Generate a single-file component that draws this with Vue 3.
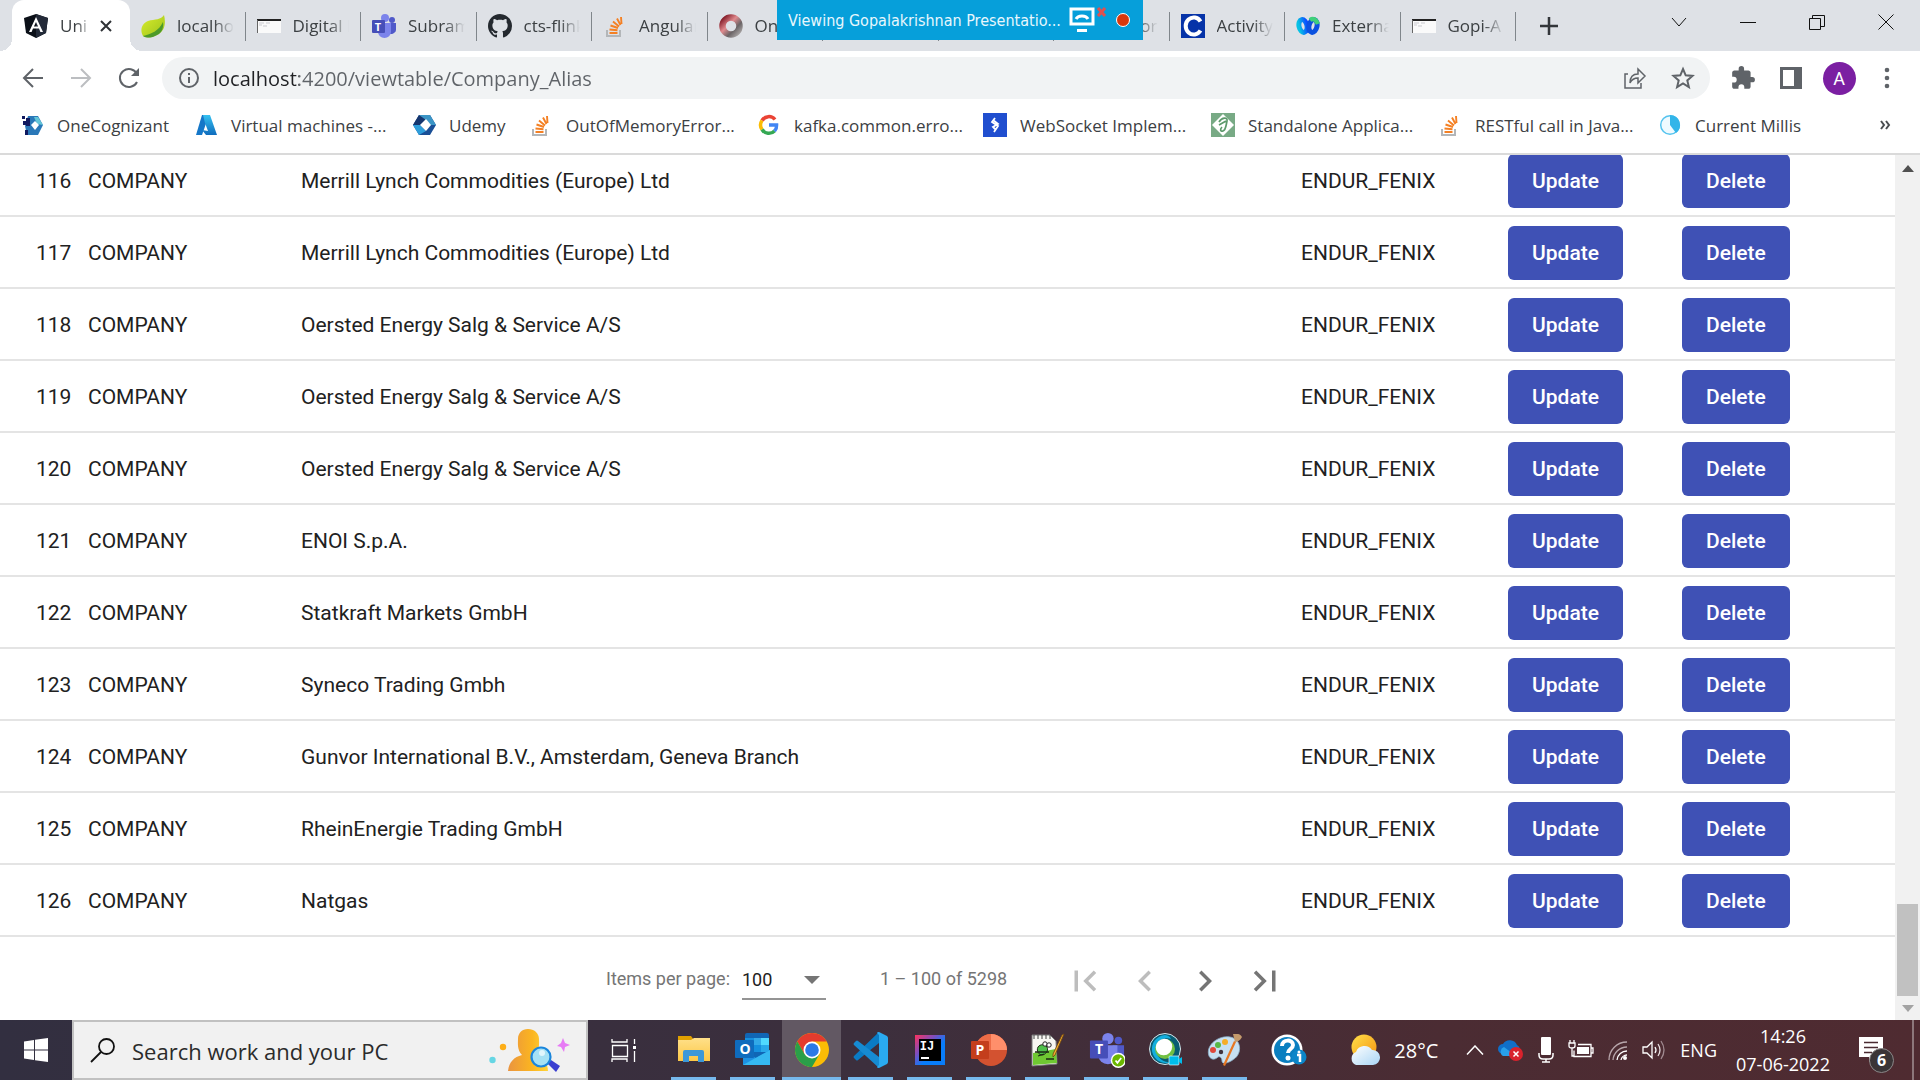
<script setup>
import { ref } from 'vue'

const tabs = [
  { icon: 'spring', label: 'localhost' },
  { icon: 'page', label: 'Digital H' },
  { icon: 'teams', label: 'Subrama', mark: 'T' },
  { icon: 'github', label: 'cts-flink' },
  { icon: 'stack', label: 'Angular' },
  { icon: 'ring', label: 'On' },
  { icon: '', label: '' },
  { icon: '', label: '' },
  { icon: '', label: 'or', end: true },
  { icon: 'cognizant', label: 'Activity' },
  { icon: 'webex', label: 'External' },
  { icon: 'page', label: 'Gopi-A' },
]

const bookmarks = [
  { icon: 'onecog', label: 'OneCognizant', width: 174 },
  { icon: 'azure', label: 'Virtual machines -...', width: 218 },
  { icon: 'udemy', label: 'Udemy', width: 117 },
  { icon: 'stack', label: 'OutOfMemoryError...', width: 228 },
  { icon: 'google', label: 'kafka.common.erro...', width: 226 },
  { icon: 'toptal', label: 'WebSocket Implem...', width: 228 },
  { icon: 'journal', label: 'Standalone Applica...', width: 227 },
  { icon: 'stack', label: 'RESTful call in Java...', width: 220 },
  { icon: 'millis', label: 'Current Millis', width: 160 },
]

const names = [
  'Merrill Lynch Commodities (Europe) Ltd',
  'Merrill Lynch Commodities (Europe) Ltd',
  'Oersted Energy Salg & Service A/S',
  'Oersted Energy Salg & Service A/S',
  'Oersted Energy Salg & Service A/S',
  'ENOI S.p.A.',
  'Statkraft Markets GmbH',
  'Syneco Trading Gmbh',
  'Gunvor International B.V., Amsterdam, Geneva Branch',
  'RheinEnergie Trading GmbH',
  'Natgas',
]
const rows = names.map((name, i) => ({ id: 116 + i, type: 'COMPANY', name, source: 'ENDUR_FENIX' }))

const apps = [
  { icon: 'explorer', name: 'File Explorer' },
  { icon: 'outlook', name: 'Outlook', mark: 'O', x: 10, y: 22 },
  { icon: 'chrome', name: 'Chrome', active: true },
  { icon: 'vscode', name: 'Visual Studio Code' },
  { icon: 'intellij', name: 'IntelliJ IDEA', mark: 'IJ', x: 15, y: 18, mono: true },
  { icon: 'powerpoint', name: 'PowerPoint', mark: 'P', x: 9, y: 23 },
  { icon: 'notepad', name: 'Notepad++' },
  { icon: 'teamsapp', name: 'Teams', mark: 'T', x: 10, y: 22 },
  { icon: 'meeting', name: 'Webex Meetings' },
  { icon: 'paint', name: 'Paint' },
]

const url = ref('localhost:4200/viewtable/Company_Alias')
const pageSize = ref('100')
</script>

<template>
  <div class="screen">
    <svg class="sprite" aria-hidden="true">
      <defs>
        <linearGradient id="g-azure" x1="0" y1="0" x2="0" y2="1"><stop offset="0" stop-color="#35c1f1" /><stop offset="1" stop-color="#0f6cbd" /></linearGradient>
        <linearGradient id="g-ring" x1="0" y1="0" x2="1" y2="1"><stop offset="0" stop-color="#7d1421" /><stop offset=".4" stop-color="#e08a8e" /><stop offset=".7" stop-color="#6a6466" /><stop offset="1" stop-color="#a9a5a5" /></linearGradient>
        <linearGradient id="g-ij" x1="0" y1="0" x2="1" y2="1"><stop offset="0" stop-color="#fe315d" /><stop offset=".35" stop-color="#7a4fc0" /><stop offset=".6" stop-color="#087cfa" /><stop offset="1" stop-color="#087cfa" /></linearGradient>
        <linearGradient id="g-sun" x1="0" y1="0" x2="1" y2="1"><stop offset="0" stop-color="#ffe04a" /><stop offset="1" stop-color="#f59310" /></linearGradient>
        <linearGradient id="g-cloud" x1="0" y1="0" x2="1" y2="1"><stop offset="0" stop-color="#ffffff" /><stop offset="1" stop-color="#a9d5f5" /></linearGradient>
        <linearGradient id="g-man" x1="0" y1="0" x2="1" y2="0"><stop offset="0" stop-color="#ea9440" /><stop offset=".6" stop-color="#fbb520" /><stop offset="1" stop-color="#ffd43a" /></linearGradient>
        <linearGradient id="g-folder" x1="0" y1="0" x2="0" y2="1"><stop offset="0" stop-color="#ffe08a" /><stop offset="1" stop-color="#fcc846" /></linearGradient>
        <linearGradient id="g-leaf" x1="0" y1="0" x2="1" y2="1"><stop offset="0" stop-color="#d9ec2c" /><stop offset="1" stop-color="#9cc31c" /></linearGradient>
        <linearGradient id="g-wx" x1="0" y1="0" x2="1" y2="0"><stop offset="0" stop-color="#07c1e4" /><stop offset="1" stop-color="#0a50ff" /></linearGradient>
      </defs>
      <symbol id="i-angular" viewBox="0 0 24 24">
        <path d="M12 0 24 4 22 19 12 24 2 19 0 4Z" fill="#0b1018" />
        <path d="M12 0V24L22 19 24 4Z" fill="#232a38" />
        <path d="M12 3 5 18h2.600l1.400-3.500h6L16.400 18H19ZM12 8l2.100 4.500H9.900Z" fill="#fff" fill-rule="evenodd" />
      </symbol>
      <symbol id="i-spring" viewBox="0 0 24 24">
        <path d="M23 1C20 6 14 5 7 7 0 10-1 17 2 22c3 2 9 2 14-1C24 17 25 9 23 1Z" fill="url(#g-leaf)" />
        <path d="M2 22C10 20 18 17 22 8c1 7-2 12-8 14-4 2-9 2-12 0Z" fill="#4d9a2a" />
      </symbol>
      <symbol id="i-page" viewBox="0 0 24 24">
        <path d="M0 5h24v14H0z" fill="#fafafa" /><path d="M0 5h24v2H0z" fill="#222" /><path d="M0 6h1v13H0z" fill="#666" />
        <path d="M2 9h5M9 9h4M2 11h3M6 12h4" stroke="#c9c9cf" fill="none" />
      </symbol>
      <symbol id="i-teams" viewBox="0 0 24 24">
        <circle cx="20" cy="6" r="3" fill="#5059c9" /><path d="M16 9h8v7a5 5 0 0 1-8 3z" fill="#5059c9" />
        <circle cx="13" cy="4" r="4" fill="#7b83eb" /><path d="M6 9h13v9a6.500 6 0 0 1-13 0z" fill="#7b83eb" />
        <rect y="6" width="13" height="13" rx="1" fill="#464eb8" />
      </symbol>
      <symbol id="i-github" viewBox="0 0 16 16">
        <path fill="#24292f" d="M8 0C3.580 0 0 3.580 0 8c0 3.540 2.290 6.530 5.470 7.590.4.070.55-.17.55-.38 0-.19-.01-.82-.01-1.490-2.010.37-2.530-.49-2.690-.94-.09-.23-.48-.94-.82-1.130-.28-.15-.68-.52-.01-.53.63-.01 1.080.58 1.230.82.72 1.210 1.870.87 2.330.66.07-.52.28-.87.51-1.070-1.780-.2-3.640-.89-3.640-3.950 0-.87.31-1.590.82-2.150-.08-.2-.36-1.020.08-2.120 0 0 .67-.21 2.200.82.64-.18 1.320-.27 2-.27s1.360.09 2 .27c1.530-1.040 2.200-.82 2.200-.82.44 1.100.16 1.920.08 2.120.51.56.82 1.270.82 2.150 0 3.070-1.870 3.750-3.650 3.950.29.25.54.73.54 1.480 0 1.070-.01 1.930-.01 2.200 0 .21.15.46.55.38A8.010 8.010 0 0 0 16 8c0-4.420-3.580-8-8-8Z" />
      </symbol>
      <symbol id="i-stack" viewBox="0 0 24 24">
        <path d="M4 16v6h13v-6" fill="none" stroke="#b3b6b9" stroke-width="2" />
        <path d="M6.500 19h8M6.500 15.500l8 .8M7.500 11.500l7.500 2.500M10 7.500l6 5M14 4.500l3.500 6.500M18 3l.5 7" fill="none" stroke="#f48024" stroke-width="1.900" />
      </symbol>
      <symbol id="i-ring" viewBox="0 0 24 24">
        <circle cx="12" cy="12" r="8.500" fill="none" stroke="url(#g-ring)" stroke-width="6.500" />
      </symbol>
      <symbol id="i-cognizant" viewBox="0 0 24 24">
        <path d="M0 0h24v24H0z" fill="#0633a8" /><path d="M19.500 7.500A8 8.500 0 1 0 19.500 16.500" fill="none" stroke="#fff" stroke-width="4" />
      </symbol>
      <symbol id="i-webex" viewBox="0 0 24 24">
        <ellipse cx="7" cy="12" rx="4" ry="6.500" fill="none" stroke="url(#g-wx)" stroke-width="5" transform="rotate(-12 7 12)" />
        <ellipse cx="17" cy="12" rx="4" ry="6.500" fill="none" stroke="#0b51e0" stroke-width="5" transform="rotate(12 17 12)" />
        <path d="M14 6c3-2 6-1 8 4" fill="none" stroke="#3fd07a" stroke-width="4.500" />
      </symbol>
      <symbol id="i-onecog" viewBox="0 0 24 24">
        <path d="M8 3h10l5 9-5 10H7l-2-9Z" fill="#2a78b8" /><path d="M14 4h4l5 8-6-1Z" fill="#63c6d8" /><path d="M2 3h3v3H2zM6 5h4v8H6zM3 8h3v4H3zM5 17h3v5H5z" fill="#10195f" /><path d="M15 8l4 4-4 5-4-5Z" fill="#fff" />
      </symbol>
      <symbol id="i-azure" viewBox="0 0 24 24">
        <path d="M8 2h7L8 22H2Z" fill="#1577c8" /><path d="M9 2h7l7 20H12l-4-5 6 1-3-8Z" fill="url(#g-azure)" />
      </symbol>
      <symbol id="i-udemy" viewBox="0 0 24 24">
        <path d="M7 2h11l6 10-6 10H7L1 12Z" fill="#1a4f96" /><path d="M7 2h11l6 10h-7l-3-5H7Z" fill="#3b95c6" /><path d="M1 12 7 2l7 5-6 5Z" fill="#16366f" /><path d="M7 22 1 12h7l6 6Z" fill="#2e9edb" /><path d="M14 6l5 6-5 6-6-6Z" fill="#fff" />
      </symbol>
      <symbol id="i-google" viewBox="0 0 24 24">
        <path d="M5 7.500A8 8 0 0 1 18 6.500" fill="none" stroke="#ea4335" stroke-width="3.500" />
        <path d="M5 7.500a8 8 0 0 0 0 9" fill="none" stroke="#fbbc05" stroke-width="3.500" />
        <path d="M5 16.500a8 8 0 0 0 12.500 1.500" fill="none" stroke="#34a853" stroke-width="3.500" />
        <path d="M12 12h7.600a8 8 0 0 1-2.100 6" fill="none" stroke="#4285f4" stroke-width="3.500" />
      </symbol>
      <symbol id="i-toptal" viewBox="0 0 24 24">
        <path d="M0 0h24v24H0z" fill="#204ecf" /><path d="M12 5l-3 4 6 4-4 6M10 7l5 4-5 3 3 3" fill="none" stroke="#fff" stroke-width="1.800" />
      </symbol>
      <symbol id="i-journal" viewBox="0 0 24 24">
        <path d="M0 0h24v24H0z" fill="#78aa85" /><path d="M12 1l11 11-11 11L1 12Z" fill="#fff" /><path d="M8 9c3-5 9-5 8-1-1 4-1 9-4 10-3 1-3-2-1-4M8 12l7-4" fill="none" stroke="#5d9a6c" stroke-width="1.700" />
      </symbol>
      <symbol id="i-millis" viewBox="0 0 24 24">
        <circle cx="12" cy="12" r="9.300" fill="#eefaff" stroke="#54c3ee" stroke-width="1.500" /><path d="M12 2a10 10 0 0 1 6 18l-6-8Z" fill="#32b5e9" />
      </symbol>
      <symbol id="i-explorer" viewBox="0 0 36 36">
        <path d="M2 4h13l3 4H2z" fill="#e0a000" /><path d="M2 8h13l3-2h16v23H2z" fill="url(#g-folder)" /><path d="M7 30V20a2 2 0 0 1 2-2h17a2 2 0 0 1 2 2v10h-6v-6h-9v6z" fill="#3c98d8" />
      </symbol>
      <symbol id="i-outlook" viewBox="0 0 36 36">
        <rect x="10" y="1" width="24" height="26" rx="2" fill="#1066b5" /><path d="M10 6h9v7h-9zM19 13h7v7h-7z" fill="#1490df" /><path d="M19 6h7v7h-7z" fill="#32a9e7" /><path d="M26 6h8v7h-8z" fill="#50d9ff" /><path d="M26 13h8v7h-8z" fill="#28a8ea" />
        <path d="M8 18l13 8 14-8v15H8z" fill="#1d91e2" /><path d="M8 33l27-15v15z" fill="#35b8f1" /><rect y="8" width="19" height="18" rx="1" fill="#0f6cbd" />
      </symbol>
      <symbol id="i-chrome" viewBox="0 0 36 36">
        <circle cx="18" cy="18" r="17" fill="#fbbc05" /><path d="M3.300 9.500A17 17 0 0 1 32.700 9.500H18L10.600 22.200Z" fill="#e33b2e" /><path d="M3.300 9.500a17 17 0 0 0 14.700 25.500l7.400-12.800H10.600Z" fill="#2a9f49" />
        <circle cx="18" cy="18" r="8.500" fill="#fff" /><circle cx="18" cy="18" r="6.800" fill="#2a79e6" />
      </symbol>
      <symbol id="i-vscode" viewBox="0 0 36 36">
        <path d="M26 0v11L5 28q-1 1-2 0l-2-2q-1-1 0-2z" fill="#0a7bc4" /><path d="M26 36V25L5 9q-1-1-2 0l-2 2q-1 1 0 2z" fill="#168bd2" /><path d="M26 0l8 4q1 1 1 2v24q0 1-1 2l-8 4q-2 0-2-1l2-2V3l-2-2q0-1 2-1z" fill="#2aaaf0" />
      </symbol>
      <symbol id="i-intellij" viewBox="0 0 36 36">
        <path d="M3 3h30v30H3z" fill="url(#g-ij)" /><path d="M7 7h22v22H7z" fill="#000" /><path d="M9 25h8v2H9z" fill="#fff" />
      </symbol>
      <symbol id="i-powerpoint" viewBox="0 0 36 36">
        <circle cx="20" cy="18" r="16" fill="#d35230" /><path d="M20 2a16 16 0 0 1 16 16H20z" fill="#ff8f6b" /><path d="M20 2a16 16 0 0 0-16 16h16z" fill="#ed6c47" /><rect y="9" width="18" height="18" rx="1" fill="#c43e1c" />
      </symbol>
      <symbol id="i-notepad" viewBox="0 0 36 36">
        <path d="M2 3h18l6 6 1 23-25 2z" fill="#f7f7f2" stroke="#777" stroke-width="1" /><path d="M3 21l23-4 1 14-24 2z" fill="#6fc832" /><path d="M4 3v4M8 3v4M12 3v4M16 3v4M20 3v4" stroke="#444" />
        <path d="M8 15c2-3 7-3 9 0 2 4-2 8-5 8s-6-4-4-8z" fill="#4fc04b" stroke="#1c2a14" stroke-width="1" /><circle cx="15" cy="12" r="2.200" fill="#fff" stroke="#222" /><circle cx="19" cy="13" r="2.200" fill="#fff" stroke="#222" /><path d="M5 20h14M8 24l6-2M16 27h8" fill="none" stroke="#1c2a14" stroke-width="1.300" />
        <path d="M34 2l-9 21-2 2v-3L32 3z" fill="#f5b22d" stroke="#6d4311" stroke-width=".8" />
      </symbol>
      <symbol id="i-teamsapp" viewBox="0 0 38 38">
        <circle cx="31" cy="9" r="4" fill="#5059c9" /><path d="M25 14h12v9a8 8 0 0 1-12 7z" fill="#5059c9" /><circle cx="20" cy="7" r="6" fill="#7b83eb" /><path d="M10 14h20v11a10 9 0 0 1-20 0z" fill="#7b83eb" /><rect x="1" y="9" width="19" height="19" rx="1" fill="#464eb8" />
        <circle cx="31" cy="30" r="8" fill="#fff" /><circle cx="31" cy="30" r="6.500" fill="#6bb700" /><path d="M28 30l2 2.500 4-5" fill="none" stroke="#fff" stroke-width="1.800" />
      </symbol>
      <symbol id="i-meeting" viewBox="0 0 36 36">
        <circle cx="17" cy="17" r="15.500" fill="#0a5d73" stroke="#d5e5ea" /><path d="M17 3a14 14 0 1 0 6 27C12 31 6 21 9 13c2-6 9-8 14-6-1-3-4-4-6-4z" fill="#13aede" /><circle cx="17" cy="17" r="10" fill="#72c043" /><ellipse cx="16" cy="15" rx="8.500" ry="8" fill="#fff" transform="rotate(-45 16 15)" />
        <rect x="21" y="24" width="10" height="9" rx="1" fill="#00bceb" stroke="#fff" stroke-width=".6" /><path d="M31 27l3-2v7l-3-2z" fill="#00bceb" />
      </symbol>
      <symbol id="i-paint" viewBox="0 0 36 36">
        <path d="M2 24C-2 13 12 3 23 5c12 2 12 17 4 22-5 4-12 6-12 2 0-3-2-5-4-4-3 3-7 3-9-1z" fill="#c7e0f2" stroke="#8cb4cc" stroke-width=".8" /><circle cx="6" cy="18" r="3" fill="#df493c" /><circle cx="11" cy="13" r="3" fill="#58b846" /><circle cx="18" cy="10" r="3" fill="#f5ad27" /><circle cx="14" cy="20" r="2.200" fill="#40333f" />
        <path d="M27 9l2 1-11 24-2-1z" fill="#e87722" /><path d="M26 2c4 0 7-1 9 3-2 4-5 5-7 5z" fill="#c49a6c" />
      </symbol>
    </svg>

    <header class="browser">
      <nav class="tabstrip" aria-label="Tabs">
        <div class="tabs">
          <div class="tab current">
            <svg class="fav"><use href="#i-angular" /></svg>
            <span class="tab-label">Uni</span>
            <button class="tab-close" aria-label="Close tab"><svg viewBox="0 0 14 14" width="14" height="14"><path d="M2 2l10 10M12 2 2 12" stroke="#2f3236" stroke-width="2" /></svg></button>
          </div>
          <div v-for="(t, i) in tabs" :key="i" class="tab">
            <svg class="fav" viewBox="0 0 24 24"><use v-if="t.icon" :href="'#i-' + t.icon" /><text v-if="t.mark" class="mark small" x="6" y="17">{{ t.mark }}</text></svg>
            <span class="tab-label" :class="{ end: t.end }">{{ t.label }}</span>
          </div>
        </div>
        <button class="new-tab" aria-label="New tab"><svg viewBox="0 0 18 18" width="18" height="18"><path d="M9 0v18M0 9h18" stroke="#33363a" stroke-width="2.500" /></svg></button>
        <div class="window-controls">
          <button aria-label="Search tabs"><svg viewBox="0 0 16 16" width="16" height="16"><path d="M1 4l7 8 7-8" /></svg></button>
          <button aria-label="Minimize"><svg viewBox="0 0 16 16" width="16" height="16"><path d="M0 8.500h16" /></svg></button>
          <button aria-label="Restore"><svg viewBox="0 0 16 16" width="16" height="16"><path d="M.5 4.500h11v11H.5zM3.500 4.500v-3h12v11h-4" /></svg></button>
          <button aria-label="Close"><svg viewBox="0 0 16 16" width="16" height="16"><path d="M.5.5l15 15M15.500.5l-15 15" /></svg></button>
        </div>
      </nav>

      <div class="share-banner">
        <span>Viewing Gopalakrishnan Presentatio...</span>
        <svg viewBox="0 0 38 28" width="38" height="28"><path d="M2 3h22v15H2z" fill="none" stroke="#fff" stroke-width="3" /><path d="M7 13c2-4 10-4 12 0" fill="none" stroke="#fff" stroke-width="3" /><path d="M8 23h10v3H8z" fill="#fff" /><path d="M29 2l7 8M36 2l-7 8" stroke="#e2504e" stroke-width="3" /></svg>
        <i class="record"></i>
      </div>

      <div class="toolbar">
        <button class="tool" aria-label="Back"><svg viewBox="0 0 24 24" width="24" height="24"><path d="M22 12H4M12 3l-9 9 9 9" /></svg></button>
        <button class="tool muted" aria-label="Forward"><svg viewBox="0 0 24 24" width="24" height="24"><path d="M2 12h18M12 3l9 9-9 9" /></svg></button>
        <button class="tool" aria-label="Reload"><svg viewBox="0 0 24 24" width="24" height="24"><path d="M20 16a9 9 0 1 1 0-8" /><path d="M22 2v8h-8z" class="solid" /></svg></button>
        <div class="omnibox">
          <svg viewBox="0 0 24 24" width="24" height="24"><circle cx="12" cy="12" r="9" /><path d="M12 11v6M12 7v2" /></svg>
          <input v-model="url" aria-label="Address" />
          <button class="tool" aria-label="Share"><svg viewBox="0 0 24 24" width="24" height="24" class="thin"><path d="M5 8H2v14h16v-5M7 17c0-6 3-9 8-9V3l7 7-7 7v-5c-4 0-6 1-8 5z" /></svg></button>
          <button class="tool" aria-label="Bookmark"><svg viewBox="0 0 24 24" width="24" height="24"><path d="M12 3l2.700 6.300 6.800.6-5.200 4.500 1.600 6.700-5.900-3.600-5.900 3.600 1.600-6.700L2.500 9.900l6.800-.6z" /></svg></button>
        </div>
        <button class="tool" aria-label="Extensions"><svg viewBox="0 0 24 24" width="26" height="26"><path class="solid" d="M20.500 11H19V7c0-1.100-.9-2-2-2h-4V3.500a2.500 2.500 0 0 0-5 0V5H4c-1.100 0-2 .9-2 2v3.800h1.500a2.700 2.700 0 0 1 0 5.400H2V20c0 1.100.9 2 2 2h3.800v-1.500a2.700 2.700 0 0 1 5.400 0V22H17c1.100 0 2-.9 2-2v-4h1.500a2.500 2.500 0 0 0 0-5z" /></svg></button>
        <button class="tool" aria-label="Side panel"><svg viewBox="0 0 22 22" width="22" height="22"><path class="solid" fill-rule="evenodd" d="M0 0h22v22H0zM3 3v16h11V3z" /></svg></button>
        <button class="tool" aria-label="Profile"><span class="avatar">A</span></button>
        <button class="tool" aria-label="Menu"><svg viewBox="0 0 24 24" width="24" height="24"><g class="solid"><circle cx="12" cy="4" r="2.300" /><circle cx="12" cy="12" r="2.300" /><circle cx="12" cy="20" r="2.300" /></g></svg></button>
      </div>

      <nav class="bookmarks" aria-label="Bookmarks">
        <a v-for="b in bookmarks" :key="b.label" href="#" :style="{ width: b.width + 'px' }">
          <svg class="fav"><use :href="'#i-' + b.icon" /></svg>{{ b.label }}
        </a>
        <button class="more" aria-label="More bookmarks"><svg viewBox="0 0 12 12" width="12" height="12"><path d="M1 2l3 4-3 4M6 2l3 4-3 4" fill="none" stroke="#4a4d51" stroke-width="2" /></svg></button>
      </nav>
    </header>

    <div class="viewport">
      <main>
        <table>
          <colgroup><col class="c-id" /><col class="c-type" /><col /><col class="c-source" /><col class="c-update" /><col class="c-delete" /></colgroup>
          <tbody>
            <tr v-for="r in rows" :key="r.id">
              <td class="id">{{ r.id }}</td>
              <td>{{ r.type }}</td>
              <td>{{ r.name }}</td>
              <td>{{ r.source }}</td>
              <td><button class="action">Update</button></td>
              <td><button class="action">Delete</button></td>
            </tr>
          </tbody>
        </table>
        <div class="paginator">
          <label for="page-size">Items per page:</label>
          <div class="size">
            <select id="page-size" v-model="pageSize"><option>50</option><option>100</option></select>
            <svg viewBox="0 0 16 8" width="16" height="8"><path d="M0 0h16L8 8z" fill="#757575" /></svg>
          </div>
          <span class="range">1 – 100 of 5298</span>
          <div class="pager">
            <button disabled aria-label="First page"><svg viewBox="0 0 24 24"><path d="M18.410 16.590L13.820 12l4.590-4.590L17 6l-6 6 6 6zM6 6h2v12H6z" /></svg></button>
            <button disabled aria-label="Previous page"><svg viewBox="0 0 24 24"><path d="M15.410 7.410L14 6l-6 6 6 6 1.410-1.410L10.830 12z" /></svg></button>
            <button aria-label="Next page"><svg viewBox="0 0 24 24"><path d="M10 6L8.590 7.410 13.170 12l-4.580 4.590L10 18l6-6z" /></svg></button>
            <button aria-label="Last page"><svg viewBox="0 0 24 24"><path d="M5.590 7.410L10.180 12l-4.590 4.590L7 18l6-6-6-6zM16 6h2v12h-2z" /></svg></button>
          </div>
        </div>
      </main>
      <div class="scrollbar" aria-hidden="true">
        <svg viewBox="0 0 12 7" width="12" height="7"><path d="M0 7l6-7 6 7z" fill="#505050" /></svg>
        <i class="thumb"></i>
        <svg viewBox="0 0 12 7" width="12" height="7"><path d="M0 0l6 7 6-7z" fill="#a3a3a3" /></svg>
      </div>
    </div>

    <footer class="taskbar">
      <button class="start" aria-label="Start"><svg viewBox="0 0 24 24" width="24" height="24"><path fill="#fff" d="M0 3.500 10 2v9.500H0zM11 1.800 24 0v11.500H11zM0 12.500h10V22L0 20.500zM11 12.500h13V24l-13-1.800z" /></svg></button>
      <div class="search">
        <svg viewBox="0 0 26 26" width="26" height="26"><circle cx="16.500" cy="9.500" r="7.500" fill="none" stroke="#111" stroke-width="1.800" /><path d="M11 15 1 25" stroke="#111" stroke-width="1.800" /></svg>
        <input placeholder="Search work and your PC" aria-label="Search work and your PC" />
        <svg viewBox="0 0 82 44" width="82" height="44" aria-hidden="true">
          <circle cx="14" cy="19" r="3.200" fill="#fdae17" /><circle cx="3.500" cy="32" r="3.200" fill="#66d6e4" />
          <path d="M19 43c1-9 6-14 14-16-5-5-4-12-4-16 0-6 4-10 10-10s11 4 11 10c0 5 1 11-5 16 9 3 14 8 14 16z" fill="url(#g-man)" />
          <path d="M58 35l4-3 9 6-4 6z" fill="#3b3fd0" /><circle cx="52" cy="29" r="9.500" fill="#a5e1f4" stroke="#1a86dc" stroke-width="2.200" /><circle cx="53" cy="25" r="3" fill="#e0f6fc" />
          <path d="M74 10l2 5 5 2-5 2-1 5-3-5-4-1 4-3z" fill="#e77bf5" />
        </svg>
      </div>
      <button class="taskview" aria-label="Task view"><svg viewBox="0 0 26 24" width="26" height="24"><path d="M1 1v3h15V1M1.500 7.500h15v11h-15zM1 24v-3h15v3M23.500 1v5M23.500 13v11M23.500 8v3" fill="none" stroke="#fff" stroke-width="1.300" /><path d="M22 8h3v3h-3z" fill="#fff" /></svg></button>
      <div class="apps">
        <button v-for="a in apps" :key="a.icon" :class="{ active: a.active }" :aria-label="a.name">
          <svg viewBox="0 0 36 36"><use :href="'#i-' + a.icon" /><text v-if="a.mark" class="mark" :class="{ mono: a.mono }" :x="a.x" :y="a.y">{{ a.mark }}</text></svg>
        </button>
        <button class="idle" aria-label="Help">
          <svg viewBox="0 0 36 36">
            <circle cx="16" cy="18" r="15.500" fill="#fff" /><circle cx="16" cy="18" r="13" fill="#0a7fc0" />
            <path d="M11 14c0-7 11-7 11-1 0 4-5 4-5 8" fill="none" stroke="#fff" stroke-width="4" /><circle cx="17" cy="26" r="2.500" fill="#fff" />
            <circle cx="28" cy="25" r="7.500" fill="#0b86c9" /><path d="M26 23h3v7" fill="none" stroke="#fff" stroke-width="2.500" /><circle cx="28" cy="20" r="1.500" fill="#fff" />
          </svg>
        </button>
      </div>
      <div class="tray">
        <button class="weather"><svg viewBox="0 0 32 32" width="32" height="32"><circle cx="16" cy="13" r="12.500" fill="url(#g-sun)" /><path d="M8 31a7 7 0 0 1 0-13 9 9 0 0 1 16-2 7.500 7.500 0 0 1 1 15z" fill="url(#g-cloud)" /></svg>28°C</button>
        <svg viewBox="0 0 18 10" width="18" height="10"><path d="M1 9.500 9 1l8 8.500" fill="none" stroke="#fff" stroke-width="1.500" /></svg>
        <svg viewBox="0 0 26 24" width="26" height="24"><path d="M5 16a5 5 0 0 1 0-10A8 8 0 0 1 19 7a5 5 0 0 1 0 9z" fill="#0f6fc9" /><path d="M5 18a5 5 0 0 1 1-9l12 9z" fill="#28a0ea" /><circle cx="18" cy="16" r="7" fill="#d9222c" /><path d="M15.500 13.500l5 5M20.500 13.500l-5 5" stroke="#fff" stroke-width="1.500" /></svg>
        <svg viewBox="0 0 16 26" width="16" height="26"><rect x="3" width="10" height="18" rx="1" fill="#fff" /><path d="M1 16v2q0 4 4 4h6q4 0 4-4v-2M8 22v3M4 25h8" fill="none" stroke="#fff" stroke-width="1.500" /></svg>
        <svg viewBox="0 0 26 20" width="26" height="20"><path d="M10 4.500h13v12H6v-6M23 8h2v5h-2M2 0v3M6 0v3M1 3h6v3q0 2-3 2t-3-2zM4 8v8h2" fill="none" stroke="#fff" stroke-width="1.300" /><path d="M9 7h12v7H9z" fill="#fff" /></svg>
        <svg viewBox="0 0 20 20" width="20" height="20"><path d="M1 20A18 18 0 0 1 19 2M5 20A14 14 0 0 1 19 7" fill="none" stroke="#b8a6ab" stroke-width="1.300" /><path d="M9 20a10 10 0 0 1 10-9M13 20a6 6 0 0 1 6-5" fill="none" stroke="#fff" stroke-width="1.300" /><circle cx="17" cy="18" r="2" fill="#fff" /></svg>
        <svg viewBox="0 0 24 20" width="24" height="20"><path d="M1 7h4l5-5v16l-5-5H1zM13 7q2 3 0 6" fill="none" stroke="#fff" stroke-width="1.300" /><path d="M16 4q4 6 0 12" fill="none" stroke="#e8dfe1" stroke-width="1.300" /><path d="M19 1q6 9 0 18" fill="none" stroke="#a08a90" stroke-width="1.300" /></svg>
        <span class="lang">ENG</span>
        <div class="clock"><time>14:26</time><time>07-06-2022</time></div>
        <button class="notify" aria-label="Notifications"><svg viewBox="0 0 26 26" width="26" height="26"><path d="M1 0h24v20h-9l-5 5v-5H1z" fill="#fff" /><path d="M6 5.500h14M6 10.500h14M6 15.500h8" stroke="#4a2b31" stroke-width="1.300" /></svg><b>6</b></button>
        <i class="peek"></i>
      </div>
    </footer>
  </div>
</template>

<style>
body { overflow: hidden; background: #fff; }
</style>

<style scoped>
.screen { display: flex; flex-direction: column; height: 100vh; font-family: "Open Sans", "Noto Sans", sans-serif; color: #3c4043; }
.screen * { box-sizing: border-box; }
.sprite { position: absolute; width: 0; height: 0; }
button { display: flex; align-items: center; justify-content: center; margin: 0; padding: 0; border: 0; background: none; font: inherit; color: inherit; }
svg { flex: none; }
.fav { width: 24px; height: 24px; }
.mark { fill: #fff; font: 700 14px "Open Sans", sans-serif; text-anchor: middle; }
.mark.small { font-size: 11px; }
.mark.mono { font: 700 12px "Liberation Mono", monospace; }

.browser { position: relative; flex: none; border-bottom: 2px solid #dadada; }
.tabstrip { display: flex; align-items: stretch; height: 51px; padding-left: 12px; background: #dee1e6; }
.tabs { display: flex; flex: 0 1 1504px; min-width: 0; }
.tab { position: relative; display: flex; flex: 1 1 0; align-items: center; gap: 12px; min-width: 0; padding: 0 12px 0 11px; font-size: 17px; }
.tab:not(.current)::after { content: ""; position: absolute; right: 0; top: 12px; width: 1px; height: 29px; background: #80868b; }
.tab.current { flex: 0 0 118px; padding: 0 12px; border-radius: 12px 12px 0 0; background: #fff; }
.tab.current::before, .tab.current::after { content: ""; position: absolute; bottom: 0; width: 12px; height: 12px; }
.tab.current::before { right: 100%; background: radial-gradient(circle at 0 0, transparent 12px, #fff 12px); }
.tab.current::after { left: 100%; background: radial-gradient(circle at 100% 0, transparent 12px, #fff 12px); }
.tab-label { flex: 1; min-width: 0; overflow: hidden; white-space: nowrap; mask-image: linear-gradient(90deg, #000 calc(100% - 20px), transparent); }
.current .tab-label { flex: none; mask-image: linear-gradient(90deg, #000 60%, rgba(0, 0, 0, .3)); }
.tab-label.end { text-align: right; }
.tab-close { width: 14px; height: 24px; }
.new-tab { width: 44px; margin-left: 11px; }
.window-controls { display: flex; margin-left: auto; }
.window-controls button { width: 69px; padding-bottom: 8px; }
.window-controls path { fill: none; stroke: #111; }

.share-banner { position: absolute; top: 0; left: 777px; display: flex; align-items: center; width: 366px; height: 40px; padding: 0 11px; background: #069fda; color: #e8f7fd; font-family: "DejaVu Sans Condensed", "Open Sans", sans-serif; font-size: 16px; white-space: nowrap; }
.share-banner span { width: 281px; }
.record { width: 14px; height: 14px; margin-left: 9px; border: 1px solid #fff; border-radius: 50%; background: #d9380c; }

.toolbar { display: flex; align-items: center; height: 54px; padding: 0 9px; }
.tool { flex: none; width: 48px; height: 42px; }
.tool svg, .omnibox > svg { fill: none; stroke: #5f6368; stroke-width: 2; }
.tool svg.thin { stroke-width: 1.5; }
.tool .solid { fill: #5f6368; stroke: none; }
.tool.muted svg { stroke: #bcbec1; }
.omnibox { display: flex; flex: 1; align-items: center; height: 42px; margin: 0 9px; padding: 0 3px 0 15px; border-radius: 21px; background: #f1f3f4; }
.omnibox input { flex: 1; min-width: 0; margin-left: 12px; padding: 0; border: 0; outline: 0; background: linear-gradient(90deg, #202124 86px, #5f6368 86px); background-clip: text; color: transparent; font: 20px "Open Sans", sans-serif; }
.avatar { width: 33px; height: 33px; border-radius: 50%; background: #7b1fa2; color: #fff; font: 18px/33px Roboto, sans-serif; }

.bookmarks { display: flex; align-items: center; height: 48px; padding: 0 26px 8px 20px; }
.bookmarks a { display: flex; flex: 0 1 auto; align-items: center; gap: 13px; font-size: 17px; color: #3c4043; text-decoration: none; white-space: nowrap; }
.more { width: 16px; height: 24px; margin-left: auto; }

.viewport { display: flex; flex: 1; min-height: 0; overflow: hidden; }
main { display: flex; flex: 1; flex-direction: column; justify-content: flex-end; min-width: 0; font-family: Roboto, sans-serif; }
table { flex: none; width: 100%; border-collapse: separate; border-spacing: 0; table-layout: fixed; font-size: 21px; color: #212121; }
.c-id { width: 88px; }
.c-type { width: 213px; }
.c-source { width: 207px; }
.c-update { width: 174px; }
.c-delete { width: 213px; }
td { height: 72px; padding: 9px 0 7px; border-bottom: 2px solid #e4e4e4; white-space: nowrap; line-height: 24px; }
.id { padding-left: 36px; }
.action { height: 54px; padding: 0 24px; border-radius: 6px; background: #3f51b5; color: #fff; font-weight: 500; }

.paginator { display: flex; flex: none; align-items: center; justify-content: flex-end; height: 83px; padding-right: 600px; font-size: 18px; color: #757575; }
.size { position: relative; width: 84px; margin: 4px 54px 0 12px; border-bottom: 2px solid #949494; }
.size select { display: block; width: 100%; height: 36px; padding: 0; border: 0; outline: 0; appearance: none; background: none; font: 18px Roboto, sans-serif; color: #212121; }
.size svg { position: absolute; right: 6px; top: 14px; }
.range { width: 175px; }
.pager { display: flex; padding-top: 5px; }
.pager button { width: 60px; height: 60px; }
.pager svg { width: 42px; height: 42px; fill: #757575; }
.pager button:disabled svg { fill: #bdbdbd; }

.scrollbar { display: flex; flex: none; flex-direction: column; align-items: center; width: 25px; padding: 10px 0 8px; background: #f1f1f1; }
.thumb { width: 21px; height: 92px; margin: auto 0 9px; background: #c1c1c1; }

.taskbar { display: flex; flex: none; align-items: stretch; height: 60px; background: linear-gradient(90deg, #322f40, #3c2f3d 45%, #4b2c33 75%, #4f2b31); color: #fff; }
.start { width: 72px; }
.search { display: flex; flex: none; align-items: center; width: 516px; padding: 0 15px 0 16px; border: 2px solid #c1c1c1; background: #f1f1f1; }
.search input { flex: 1; min-width: 0; height: 36px; margin-left: 16px; padding: 2px 0 0; border: 0; outline: 0; background: none; font: 22px "Open Sans", sans-serif; }
.search input::placeholder { color: #2b2b2b; opacity: 1; }
.taskview { width: 72px; }
.apps { display: flex; margin-left: 4px; }
.apps button { position: relative; width: 59px; }
.apps svg { width: 36px; height: 36px; }
.apps button::after { content: ""; position: absolute; bottom: 0; left: 7px; right: 7px; height: 3px; background: #76b9ed; }
.apps .active { background: #625863; }
.apps .active::after { left: 0; right: 0; }
.apps .idle { margin-left: 5px; }
.apps .idle::after { display: none; }
.tray { display: flex; align-items: center; margin-left: auto; gap: 14px; }
.weather { gap: 14px; margin-right: 14px; font-size: 20px; }
.lang { font-size: 18px; }
.clock { display: flex; flex-direction: column; width: 104px; text-align: center; font-size: 18px; line-height: 28px; }
.notify { position: relative; width: 26px; height: 26px; margin: 0 14px 0 9px; }
.notify b { position: absolute; left: 11px; top: 11px; width: 25px; height: 25px; border: 1px solid #8b8788; border-radius: 50%; background: #3a3436; font-size: 16px; line-height: 23px; text-align: center; }
.peek { align-self: stretch; width: 8px; border-left: 2px solid #8d777b; }
</style>
